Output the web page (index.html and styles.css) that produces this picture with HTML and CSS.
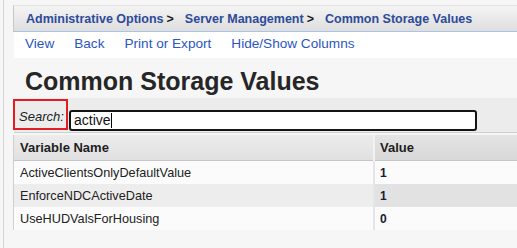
FILE: index.html
```html
<!DOCTYPE html>
<html lang="en">
<head>
  <meta charset="UTF-8" />
  <title>Common Storage Values</title>
  <link rel="stylesheet" href="styles.css">
</head>
<body>
  <div class="page">
    <div class="crumbs">
      <span class="crumb">Administrative Options</span><span class="sep">&gt;</span>
      <span class="crumb">Server Management</span><span class="sep">&gt;</span>
      <span class="crumb">Common Storage Values</span>
    </div>

    <div class="menu">
      <a href="#">View</a>
      <a href="#">Back</a>
      <a href="#">Print or Export</a>
      <a href="#">Hide/Show Columns</a>
    </div>

    <h1 class="title">Common Storage Values</h1>

    <div class="search">
      <label class="search-label" for="q">Search:</label>
      <div class="search-box" id="q">active<span class="caret"></span></div>
    </div>

    <table class="grid">
      <thead>
        <tr>
          <th class="col-name">Variable Name</th>
          <th class="col-value">Value</th>
        </tr>
      </thead>
      <tbody>
        <tr><td>ActiveClientsOnlyDefaultValue</td><td class="val">1</td></tr>
        <tr class="alt"><td>EnforceNDCActiveDate</td><td class="val">1</td></tr>
        <tr><td>UseHUDValsForHousing</td><td class="val">0</td></tr>
      </tbody>
    </table>
  </div>
</body>
</html>
```

FILE: styles.css
```css
body {
  margin: 0;
  background: #f6f6f6;
  font-family: "Liberation Sans", Arial, sans-serif;
  width: 517px;
  height: 248px;
  overflow: hidden;
}

.page {
  margin-left: 3px;
  border-left: 1px solid #d4d4d4;
  padding-left: 9px;
  padding-top: 5px;
  height: 243px;
}

.crumbs {
  height: 25px;
  display: flex;
  align-items: center;
  padding-left: 12px;
  background: linear-gradient(#f4f4f4, #dedede);
  border-left: 1px solid #c8c8c8;
  border-top: 1px solid #e2e2e2;
  border-bottom: 1px solid #a9c3ea;
  font-size: 12.5px;
  font-weight: bold;
  white-space: nowrap;
}

.crumb {
  color: #2e4a9a;
}

.sep {
  color: #1a1a1a;
  margin: 0 11px 0 3px;
}

.menu {
  display: flex;
  gap: 20px;
  padding: 4px 0 0 11px;
  height: 22px;
  background: #ffffff;
  margin-left: 1px;
}

.menu a {
  color: #2c56bf;
  text-decoration: none;
  font-size: 13.6px;
}

.title {
  margin: 9px 0 0 12px;
  font-size: 25px;
  font-weight: bold;
  color: #262626;
  height: 31px;
}

.search {
  display: flex;
  align-items: center;
  height: 34px;
  background: #ececec;
  border-bottom: 1px solid #d0d0d0;
  margin-left: 1px;
}

.search-label {
  box-sizing: border-box;
  height: 31px;
  width: 55px;
  border: 2px solid #e01e24;
  display: flex;
  align-items: center;
  padding: 4px 0 0 4px;
  font-style: italic;
  font-size: 13px;
  color: #222;
  align-self: flex-start;
  margin-top: 1px;
  margin-left: -1px;
}

.search-box {
  box-sizing: border-box;
  width: 408px;
  height: 21px;
  border: 2px solid #141414;
  border-radius: 3px;
  background: #ffffff;
  margin-top: 10px;
  margin-left: 1px;
  padding-left: 3px;
  font-size: 14px;
  line-height: 17px;
  color: #111;
}

.caret {
  display: inline-block;
  width: 1px;
  height: 15px;
  background: #000;
  vertical-align: -3px;
}

.grid {
  margin-top: 2px;
  width: 505px;
  border-collapse: collapse;
  border-left: 1px solid #cfcfcf;
  font-size: 12.7px;
  color: #222;
}

.grid th {
  height: 25px;
  text-align: left;
  padding: 0 0 0 6px;
  font-weight: bold;
  font-size: 13px;
  color: #1e1e1e;
  background: linear-gradient(#ececec, #e0e0e0);
  border-bottom: 1px solid #c6c6c6;
}

.grid th.col-value {
  background: linear-gradient(#e4e4e4, #d8d8d8);
  border-left: 2px solid #f2f2f2;
  padding-left: 5px;
}

.col-name {
  width: 353px;
}

.grid td {
  height: 23px;
  padding: 0 0 0 6px;
  background: #fbfbfb;
}

.grid td.val {
  border-left: 2px solid #e6e6e6;
  padding-left: 5px;
  color: #1a1a30;
  font-weight: bold;
  font-size: 12px;
}

.grid tr.alt td {
  background: #ededed;
}

.grid tr.alt td.val {
  background: #e2e2e2;
}
```
